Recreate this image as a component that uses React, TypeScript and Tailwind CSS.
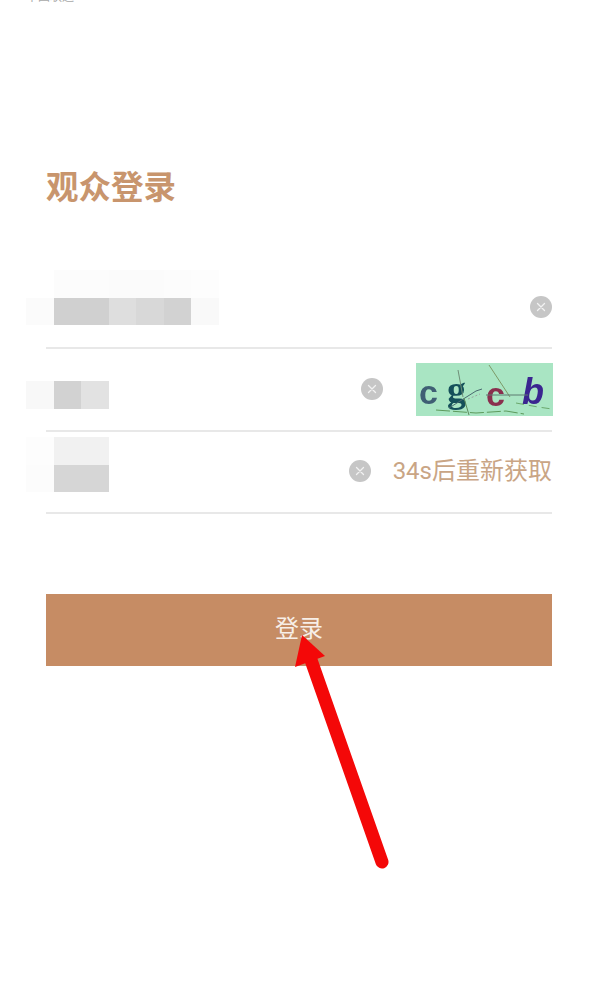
import React from "react";

const FONT = "font-['Roboto','Noto_Sans_CJK_SC',sans-serif]";

type Cell = string;

// 打码区域: 每格 27.5px
function Mosaic({ rows }: { rows: Cell[][] }) {
  return (
    <div className="flex flex-col">
      {rows.map((row, i) => (
        <div key={i} className="flex h-[27.5px]">
          {row.map((c, j) => (
            <div key={j} className={`h-full w-[27.5px] ${c}`} />
          ))}
        </div>
      ))}
    </div>
  );
}

function ClearIcon({ className = "" }: { className?: string }) {
  return (
    <svg viewBox="0 0 22 22" className={`h-[22px] w-[22px] shrink-0 ${className}`}>
      <circle cx="11" cy="11" r="11" fill="#c6c6c6" />
      <path d="M7.5 7.5l7 7M14.5 7.5l-7 7" stroke="#f2f2f2" strokeWidth="1.3" strokeLinecap="round" />
    </svg>
  );
}

function Captcha() {
  return (
    <div className="relative h-[53px] w-[137px] shrink-0 overflow-hidden bg-[#a9e5c3] blur-[0.4px]">
      <span className="absolute left-[3px] top-[9px] font-['Liberation_Sans',sans-serif] text-[34px] font-bold leading-[40px] text-[#3f5f74]">c</span>
      <span className="absolute left-[31px] top-[6px] font-['Liberation_Serif',serif] text-[38px] font-bold leading-[40px] text-[#14505a]">g</span>
      <span className="absolute left-[70px] top-[11px] font-['Liberation_Sans',sans-serif] text-[34px] font-bold leading-[40px] text-[#8a2f4e]">c</span>
      <span className="absolute left-[106px] top-[9px] font-['Liberation_Sans',sans-serif] text-[36px] font-bold italic leading-[40px] text-[#3a2590]">b</span>
      <svg viewBox="0 0 137 53" className="absolute inset-0 h-full w-full" fill="none">
        <path d="M73 2l21 32" stroke="#7d9a68" strokeWidth="1" />
        <path d="M42 7l5 27" stroke="#6f8f78" strokeWidth="1" />
        <path d="M33 45l27-17 6-2" stroke="#4a6a70" strokeWidth="1" />
        <path d="M48 35l5 17" stroke="#5d8a5c" strokeWidth="1" />
        <path d="M70 32h42" stroke="#5d7a70" strokeWidth="1" />
        <path d="M20 47l40 3 30-2 18 3" stroke="#5d9a5c" strokeWidth="1" strokeDasharray="14 3" />
        <path d="M100 40l22 4 14 2" stroke="#6aa86c" strokeWidth="1" strokeDasharray="8 5" />
        <path d="M52 36l12-5" stroke="#9aa0a0" strokeWidth="1" strokeDasharray="2 2" />
      </svg>
    </div>
  );
}

export default function App() {
  return (
    <div className={`relative h-[983px] w-[600px] overflow-hidden bg-white ${FONT}`}>
      <div className="-mt-[10px] h-[14px] pl-[26px] text-[12px] leading-[14px] text-[#a8a8a8]">中国联通</div>

      <div className="pl-[46px] pr-[48px]">
        <h1 className="mt-[161px] text-[32.5px] font-bold leading-[46px] text-[#c8956d]">观众登录</h1>

        <div className="mt-[55px]">
          <div className="flex h-[83px] items-start justify-between border-b-2 border-[#e8e8e8]">
            <div className="-ml-[20px] mt-[4px]">
              <Mosaic
                rows={[
                  ["bg-white", "bg-[#fcfcfc]", "bg-[#fcfcfc]", "bg-[#fbfbfb]", "bg-[#fbfbfb]", "bg-[#fcfcfc]", "bg-[#fdfdfd]", "bg-white"],
                  ["bg-[#fbfbfb]", "bg-[#d0d0d0]", "bg-[#d0d0d0]", "bg-[#dedede]", "bg-[#d8d8d8]", "bg-[#d2d2d2]", "bg-[#f9f9f9]", "bg-white"],
                ]}
              />
            </div>
            <ClearIcon className="mt-[30px]" />
          </div>

          <div className="flex h-[83px] items-start justify-between border-b-2 border-[#e8e8e8]">
            <div className="-ml-[20px] mt-[32px]">
              <Mosaic rows={[["bg-[#f8f8f8]", "bg-[#d2d2d2]", "bg-[#e2e2e2]"]]} />
            </div>
            <div className="flex items-start">
              <ClearIcon className="mr-[33px] mt-[29px]" />
              <div className="-mr-[1px] mt-[14px]">
                <Captcha />
              </div>
            </div>
          </div>

          <div className="flex h-[82px] items-start justify-between border-b-2 border-[#e8e8e8]">
            <div className="-ml-[20px] mt-[5px]">
              <Mosaic
                rows={[
                  ["bg-[#fdfdfd]", "bg-[#f1f1f1]", "bg-[#f1f1f1]"],
                  ["bg-[#fcfcfc]", "bg-[#d6d6d6]", "bg-[#d6d6d6]"],
                ]}
              />
            </div>
            <div className="flex items-start">
              <ClearIcon className="mr-[22px] mt-[28px]" />
              <span className="mt-[22px] text-[24px] leading-[34px] text-[#c9a585]">34s后重新获取</span>
            </div>
          </div>
        </div>

        <button className="mt-[80px] flex h-[72px] w-full items-center justify-center bg-[#c68c64] pb-[2px] text-[24px] text-[#f7efe8]">
          登录
        </button>
      </div>

      {/* 红色箭头标注 */}
      <svg viewBox="0 0 600 983" className="pointer-events-none absolute inset-0 h-[983px] w-[600px]" fill="none">
        <path d="M382 862L311 660" stroke="#f40808" strokeWidth="13" strokeLinecap="round" />
        <path d="M302 635L325 656L295 667Z" fill="#f40808" />
      </svg>
    </div>
  );
}
